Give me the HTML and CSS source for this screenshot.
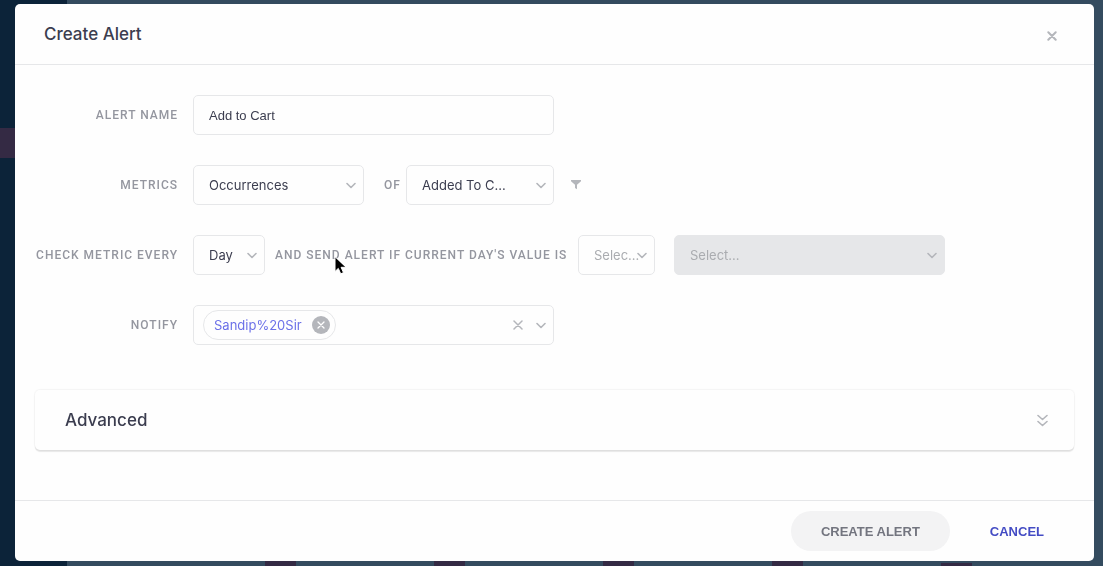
FILE: index.html
```
<!DOCTYPE html>
<html lang="en">
<head>
  <meta charset="UTF-8">
  <title>Create Alert</title>
  <link rel="stylesheet" href="styles.css">
</head>
<body>
  <!-- Dashboard behind the modal -->
  <div class="page">
    <div class="sidebar"><div class="sidebar-active"></div></div>
    <div class="chart">
      <span class="bar"></span>
      <span class="bar"></span>
      <span class="bar"></span>
      <span class="bar"></span>
      <span class="bar bar-short"></span>
    </div>
  </div>

  <!-- Modal -->
  <div class="overlay">
    <form class="modal">
      <header class="modal-header">
        <h2>Create Alert</h2>
        <button type="button" class="icon-button close" aria-label="Close">
          <svg width="10" height="10" viewBox="0 0 10 10"><path d="M1.3 1.3l7.4 7.4M8.7 1.3l-7.4 7.4" stroke-width="2"/></svg>
        </button>
      </header>

      <div class="modal-body">
        <div class="row">
          <label class="label" for="alert-name">ALERT NAME</label>
          <input type="text" id="alert-name" class="control field-wide" value="Add to Cart">
        </div>

        <div class="row">
          <label class="label" for="metric">METRICS</label>
          <div class="select field-metric">
            <select id="metric" class="control"><option>Occurrences</option></select>
            <svg class="chevron" width="10" height="8" viewBox="0 0 10 8"><path d="M1 2.5l4 4 4-4"/></svg>
          </div>
          <label class="inline-label of-label" for="event">OF</label>
          <div class="select field-event">
            <select id="event" class="control"><option>Added To C...</option></select>
            <svg class="chevron" width="10" height="8" viewBox="0 0 10 8"><path d="M1 2.5l4 4 4-4"/></svg>
          </div>
          <button type="button" class="icon-button filter" aria-label="Filter">
            <svg width="12" height="10" viewBox="0 0 12 10"><path d="M1 0h10v1.3L7 4.8V9.2L5 8V4.8L1 1.3z" fill="#b4b6bb" stroke="none"/></svg>
          </button>
        </div>

        <div class="row">
          <label class="label" for="period">CHECK METRIC EVERY</label>
          <div class="select field-period">
            <select id="period" class="control"><option>Day</option></select>
            <svg class="chevron" width="10" height="8" viewBox="0 0 10 8"><path d="M1 2.5l4 4 4-4"/></svg>
          </div>
          <label class="inline-label send-label" for="condition">AND SEND ALERT IF CURRENT DAY'S VALUE IS</label>
          <div class="select field-condition">
            <select id="condition" class="control placeholder"><option>Selec...</option></select>
            <svg class="chevron" width="10" height="8" viewBox="0 0 10 8"><path d="M1 2.5l4 4 4-4"/></svg>
          </div>
          <div class="select field-value">
            <select class="control placeholder" aria-label="Value" disabled><option>Select...</option></select>
            <svg class="chevron" width="10" height="8" viewBox="0 0 10 8"><path d="M1 2.5l4 4 4-4"/></svg>
          </div>
        </div>

        <div class="row">
          <span class="label" id="notify-label">NOTIFY</span>
          <div class="control field-wide tags" role="group" aria-labelledby="notify-label">
            <span class="tag">
              Sandip%20Sir
              <button type="button" class="icon-button tag-remove" aria-label="Remove Sandip%20Sir">
                <svg width="8" height="8" viewBox="0 0 8 8"><path d="M1 1l6 6M7 1L1 7"/></svg>
              </button>
            </span>
            <button type="button" class="icon-button clear" aria-label="Clear all">
              <svg width="10" height="10" viewBox="0 0 10 10"><path d="M1 1l8 8M9 1L1 9"/></svg>
            </button>
            <button type="button" class="icon-button" aria-label="Open list">
              <svg width="10" height="8" viewBox="0 0 10 8"><path d="M1 2.5l4 4 4-4"/></svg>
            </button>
          </div>
        </div>

        <button type="button" class="advanced">
          Advanced
          <svg width="11" height="14" viewBox="0 0 11 14"><path d="M1 2.5l4.5 4L10 2.5M1 8.5l4.5 4L10 8.5"/></svg>
        </button>
      </div>

      <footer class="modal-footer">
        <button type="submit" class="btn btn-primary">CREATE ALERT</button>
        <button type="button" class="btn btn-link">CANCEL</button>
      </footer>
    </form>
  </div>

  <!-- Mouse pointer -->
  <svg class="pointer" width="14" height="20" viewBox="0 0 14 20"><path d="M1 1v14.5l3.3-3.1 2.4 5.4 2.8-1.2-2.4-5.3h4.7z"/></svg>
</body>
</html>
```

FILE: styles.css
```
* {
  box-sizing: border-box;
}
body {
  margin: 0;
  font-family: Inter, "Liberation Sans", sans-serif;
  font-size: 13px;
  color: #3b3d4f;
}
button,
input,
select {
  font: inherit;
  color: inherit;
}
svg {
  display: block;
  fill: none;
  stroke: #b4b6bb;
  stroke-width: 1.6;
  stroke-linecap: round;
  stroke-linejoin: round;
}

/* Dashboard */
.page {
  display: flex;
  height: 100vh;
  overflow: hidden;
}
.sidebar {
  width: 67px;
  padding-top: 128px;
  background-color: #0c2339;
}
.sidebar-active {
  height: 30px;
  background-color: #342a44;
}
.chart {
  flex: 1;
  display: flex;
  align-items: flex-end;
  gap: 138px;
  padding-left: 198px;
  background-color: #344b5f;
}
.bar {
  flex: none;
  width: 31px;
  height: 80px;
  background-color: #342a44;
}
.bar-short {
  height: 3px;
}

/* Modal */
.overlay {
  position: fixed;
  inset: 0;
  padding: 4px 9px 5px 15px;
}
.modal {
  display: flex;
  flex-direction: column;
  min-height: 100%;
  background-color: #fefefe;
  border-radius: 5px;
}
.modal-header {
  display: flex;
  align-items: center;
  justify-content: space-between;
  height: 61px;
  padding: 0 37px 0 29px;
  border-bottom: 1px solid #e6e7e9;
}
.modal-header h2 {
  margin: 0;
  font-size: 17px;
  font-weight: 500;
}
.modal-body {
  flex: 1;
  display: flex;
  flex-direction: column;
  gap: 30px;
  padding: 30px 20px;
}
.modal-footer {
  display: flex;
  align-items: center;
  justify-content: flex-end;
  gap: 10px;
  height: 61px;
  padding: 0 20px;
  border-top: 1px solid #e6e7e9;
}

/* Form rows */
.row {
  display: flex;
  align-items: center;
  height: 40px;
}
.label,
.inline-label {
  font-family: Roboto, sans-serif;
  font-size: 12px;
  font-weight: 500;
  letter-spacing: 1px;
  color: #94969f;
  white-space: nowrap;
}
.label {
  width: 143px;
  margin-right: 15px;
  text-align: right;
}
.of-label {
  width: 42px;
  padding-left: 20px;
}
.send-label {
  width: 313px;
  padding-left: 10px;
}
.control {
  width: 100%;
  height: 40px;
  padding: 0 15px;
  border: 1px solid #e6e7e9;
  border-radius: 5px;
  background-color: #fefefe;
  outline: none;
}
input.control {
  font-family: "Liberation Sans", Arial, sans-serif;
}
.select {
  display: grid;
  align-items: center;
}
.select > * {
  grid-area: 1 / 1;
}
.select select {
  appearance: none;
  padding-right: 0;
  opacity: 1;
}
.select select:disabled {
  background-color: #e6e7e9;
}
.select .placeholder {
  color: #aaacb0;
}
.chevron {
  justify-self: end;
  margin-right: 8px;
  pointer-events: none;
}
.field-wide {
  width: 361px;
}
.field-metric {
  width: 171px;
}
.field-event {
  width: 148px;
}
.field-period {
  width: 72px;
}
.field-condition {
  width: 77px;
}
.field-value {
  width: 271px;
  margin-left: 19px;
}

/* Icon buttons */
.icon-button {
  display: flex;
  align-items: center;
  justify-content: center;
  padding: 0;
  border: none;
  background: none;
  cursor: pointer;
}
.close {
  padding-top: 3px;
}
.filter {
  margin-left: 16px;
}

/* Notify list */
.tags {
  display: flex;
  align-items: center;
  padding: 0 7px 0 9px;
}
.tag {
  display: flex;
  align-items: center;
  gap: 10px;
  height: 30px;
  padding: 0 5px 0 10px;
  border: 1px solid #e6e7e9;
  border-radius: 15px;
  color: #6b70e8;
}
.tag-remove {
  width: 18px;
  height: 18px;
  border-radius: 50%;
  background-color: #b4b6bb;
}
.tag-remove svg {
  stroke: #fff;
  stroke-width: 1.3;
}
.clear {
  margin: 0 13px 0 auto;
}
.clear svg {
  stroke-width: 1.5;
}

/* Advanced panel */
.advanced {
  display: flex;
  align-items: center;
  justify-content: space-between;
  height: 60px;
  margin-top: 15px;
  padding: 0 26px 0 30px;
  border: none;
  border-radius: 5px;
  background-color: #fefefe;
  box-shadow: 0 0 1px 1px rgba(0, 0, 0, 0.04), 0 2px 1px rgba(0, 0, 0, 0.09);
  font-size: 17px;
  font-weight: 500;
}

/* Footer buttons */
.btn {
  height: 40px;
  padding: 0 30px;
  border: none;
  border-radius: 20px;
  background: none;
  font-family: "Liberation Sans", Arial, sans-serif;
  font-size: 13px;
  font-weight: bold;
  cursor: pointer;
}
.btn-primary {
  background-color: #f3f3f4;
  color: #73757f;
}
.btn-link {
  color: #444cc4;
}

.pointer {
  position: absolute;
  top: 256px;
  left: 334px;
  fill: #000;
  stroke: #fff;
  stroke-width: 1;
}
```
